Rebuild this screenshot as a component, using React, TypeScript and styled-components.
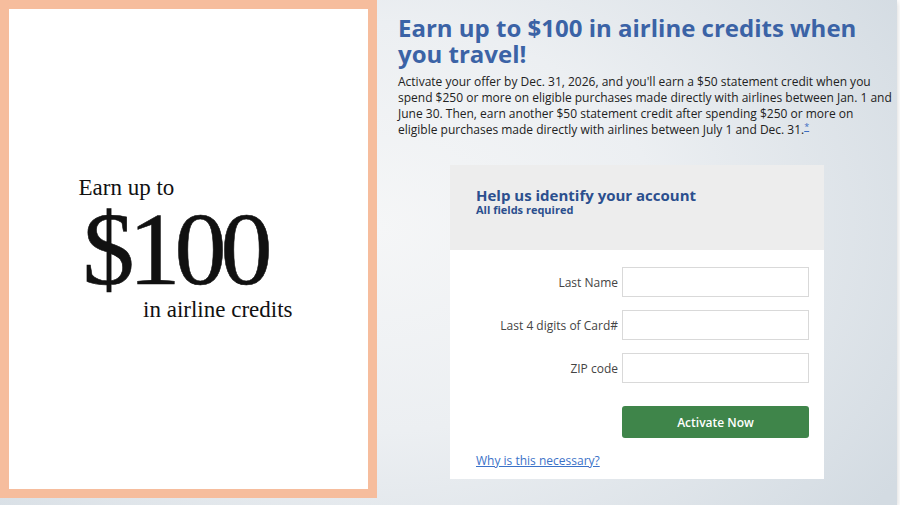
import React from "react";
import styled, { createGlobalStyle } from "styled-components";

const Global = createGlobalStyle`
  html, body { margin: 0; padding: 0; background: #ffffff; }
  body { font-family: "Open Sans", "Liberation Sans", Arial, sans-serif; }
  * { box-sizing: border-box; }
`;

const Stage = styled.div`
  width: 897px;
  height: 505px;
  display: flex;
  align-items: flex-start;
  background: radial-gradient(ellipse 70% 90% at 42% 45%, #f5f6f7 0%, #eceff2 45%, #d3dbe2 100%);
  box-shadow: 0 2px 6px rgba(0, 0, 0, 0.18);
`;

const PromoPanel = styled.div`
  flex: 0 0 377px;
  height: 498px;
  border: 9px solid #f6bd9d;
  background: #ffffff;
  display: flex;
  align-items: center;
  justify-content: center;
  padding-right: 6px;
`;

const PromoArt = styled.div`
  width: 214px;
  display: flex;
  flex-direction: column;
  font-family: "Liberation Serif", "Times New Roman", serif;
  color: #111;
`;

const PromoSmall = styled.div<{ $align: "left" | "right" }>`
  font-size: 23px;
  line-height: 24px;
  text-align: ${(p) => p.$align};
`;

const PromoBig = styled.div`
  font-size: 104px;
  line-height: 98px;
  letter-spacing: -6px;
  padding-left: 4px;
  -webkit-text-stroke: 0.6px #111;
`;

const Content = styled.div`
  flex: 1;
  padding: 15px 3px 0 21px;
  display: flex;
  flex-direction: column;
`;

const Headline = styled.h1`
  margin: 0;
  font-size: 24px;
  line-height: 26px;
  font-weight: 700;
  color: #3b63a6;
`;

const Lead = styled.p`
  margin: 7px 0 0;
  font-size: 12px;
  line-height: 16px;
  color: #222;
`;

const Footnote = styled.a`
  position: relative;
  top: -4px;
  font-size: 9px;
  line-height: 0;
  color: #3b6bc2;
  text-decoration: underline;
`;

const Card = styled.div`
  margin: 27px 0 0 52px;
  width: 374px;
  background: #ffffff;
`;

const CardHead = styled.div`
  height: 85px;
  background: #ededed;
  padding: 21px 26px 0;
`;

const CardTitle = styled.div`
  font-size: 15px;
  line-height: 18px;
  font-weight: 700;
  color: #2b4f8e;
`;

const CardSub = styled.div`
  font-size: 11px;
  line-height: 12px;
  font-weight: 700;
  color: #2b4f8e;
`;

const CardBody = styled.div`
  padding: 17px 15px 9px 26px;
`;

const FieldGrid = styled.div`
  display: grid;
  grid-template-columns: 142px 187px;
  column-gap: 4px;
  row-gap: 13px;
  align-items: center;
`;

const Label = styled.label`
  text-align: right;
  font-size: 12px;
  color: #444;
  white-space: nowrap;
`;

const Input = styled.input`
  width: 187px;
  height: 30px;
  border: 1px solid #d9d9d9;
  background: #fff;
  font-family: inherit;
  font-size: 12px;
  padding: 0 8px;
  outline: none;
`;

const ActionRow = styled.div`
  display: flex;
  justify-content: flex-end;
  margin-top: 23px;
`;

const ActivateButton = styled.button`
  width: 187px;
  height: 32px;
  border: none;
  border-radius: 3px;
  background: #3f854a;
  color: #fff;
  font-family: inherit;
  font-size: 12px;
  font-weight: 600;
  cursor: pointer;
`;

const HelpLink = styled.a`
  display: block;
  margin-top: 14px;
  font-size: 12px;
  line-height: 18px;
  color: #3b72c8;
  text-decoration: underline;
`;

const fields = [
  { id: "ln", label: "Last Name" },
  { id: "cd", label: "Last 4 digits of Card#" },
  { id: "zip", label: "ZIP code" },
];

export default function App() {
  return (
    <>
      <Global />
      <Stage>
        <PromoPanel>
          <PromoArt>
            <PromoSmall $align="left">Earn up to</PromoSmall>
            <PromoBig>$100</PromoBig>
            <PromoSmall $align="right">in airline credits</PromoSmall>
          </PromoArt>
        </PromoPanel>
        <Content>
          <Headline>Earn up to $100 in airline credits when you travel!</Headline>
          <Lead>
            Activate your offer by Dec. 31, 2026, and you'll earn a $50 statement credit when you
            spend $250 or more on eligible purchases made directly with airlines between Jan. 1 and
            June 30. Then, earn another $50 statement credit after spending $250 or more on
            eligible purchases made directly with airlines between July 1 and Dec. 31.
            <Footnote href="#">*</Footnote>
          </Lead>
          <Card>
            <CardHead>
              <CardTitle>Help us identify your account</CardTitle>
              <CardSub>All fields required</CardSub>
            </CardHead>
            <CardBody>
              <FieldGrid>
                {fields.map((f) => (
                  <React.Fragment key={f.id}>
                    <Label htmlFor={f.id}>{f.label}</Label>
                    <Input id={f.id} type="text" />
                  </React.Fragment>
                ))}
              </FieldGrid>
              <ActionRow>
                <ActivateButton type="button">Activate Now</ActivateButton>
              </ActionRow>
              <HelpLink href="#">Why is this necessary?</HelpLink>
            </CardBody>
          </Card>
        </Content>
      </Stage>
    </>
  );
}
